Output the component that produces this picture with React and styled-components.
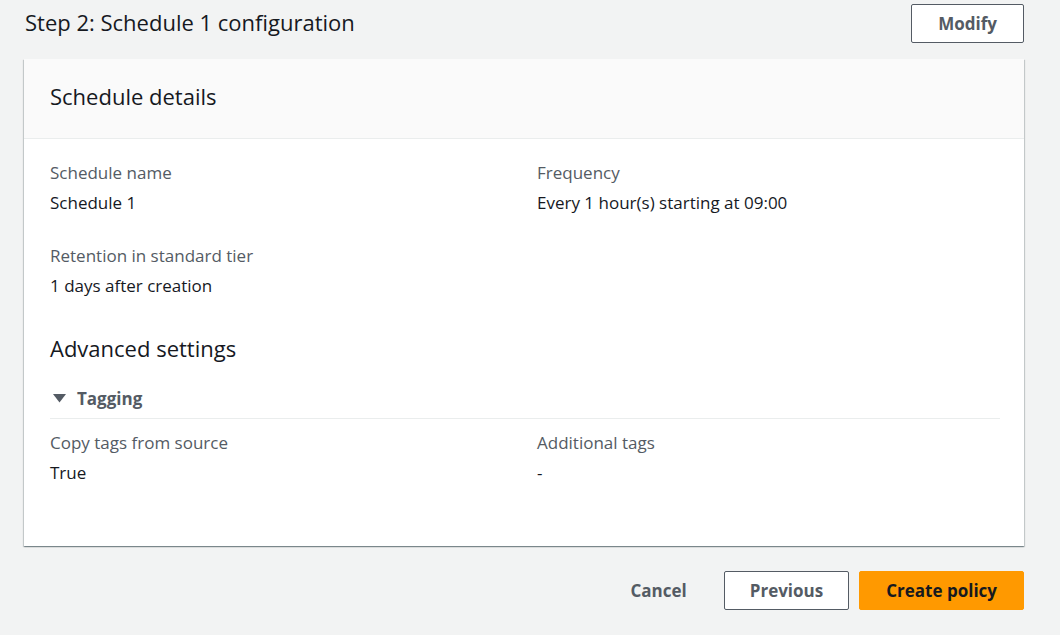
import React from 'react';
import styled, { createGlobalStyle } from 'styled-components';

const GlobalStyle = createGlobalStyle`
  body {
    margin: 0;
    background: #f2f3f3;
    font-family: "Open Sans", "Noto Sans", sans-serif;
    color: #16191f;
  }
`;

const Page = styled.div`
  width: 1060px;
  height: 635px;
  padding: 4px 36px 0 24px;
  box-sizing: border-box;
  overflow: hidden;
`;

const TitleBar = styled.div`
  display: flex;
  align-items: center;
  justify-content: space-between;
  height: 38px;
  margin-bottom: 17px;
`;

const StepTitle = styled.h2`
  margin: 0 0 3px 1px;
  font-size: 22px;
  line-height: 30px;
  font-weight: 400;
  color: #16191f;
`;

const Button = styled.button`
  height: 39px;
  padding: 0 ${(p) => p.$pad || 24}px;
  border-radius: 2px;
  font-family: inherit;
  font-size: 17px;
  font-weight: 700;
  cursor: pointer;
  border: 1px solid ${(p) => (p.$primary ? '#ff9900' : p.$link ? 'transparent' : '#545b64')};
  background: ${(p) => (p.$primary ? '#ff9900' : p.$link ? 'transparent' : '#ffffff')};
  color: ${(p) => (p.$primary ? '#16191f' : '#545b64')};
`;

const Card = styled.section`
  background: #ffffff;
  box-shadow: 0 1px 1px 0 rgba(0, 28, 36, 0.3), 1px 1px 1px 0 rgba(0, 28, 36, 0.15),
    -1px 1px 1px 0 rgba(0, 28, 36, 0.15);
`;

const CardHeader = styled.div`
  height: 79px;
  display: flex;
  align-items: center;
  padding: 0 26px;
  background: #fafafa;
  border-bottom: 1px solid #eaeded;
`;

const CardTitle = styled.h3`
  margin: 0 0 5px 0;
  font-size: 22px;
  line-height: 30px;
  font-weight: 400;
`;

const CardBody = styled.div`
  padding: 23px 24px 62px 26px;
`;

const Grid = styled.div`
  display: grid;
  grid-template-columns: 1fr 1fr;
  column-gap: 24px;
  row-gap: 31px;
`;

const Field = styled.div`
  display: flex;
  flex-direction: column;
  gap: 8px;
`;

const Label = styled.div`
  font-size: 17px;
  line-height: 22px;
  color: #545b64;
`;

const Value = styled.div`
  font-size: 17px;
  line-height: 22px;
  color: #16191f;
`;

const SectionTitle = styled.h3`
  margin: 36px 0 24px;
  font-size: 22px;
  line-height: 30px;
  font-weight: 400;
`;

const Expander = styled.div`
  display: flex;
  align-items: center;
  gap: 11px;
  height: 22px;
  padding: 0 0 9px 3px;
  border-bottom: 1px solid #eaeded;
  margin-bottom: 13px;
  font-size: 17px;
  font-weight: 700;
  color: #545b64;
`;

const Footer = styled.div`
  display: flex;
  justify-content: flex-end;
  align-items: center;
  gap: 10px;
  margin-top: 25px;
`;

const Caret = () => (
  <svg width="13" height="10" viewBox="0 0 13 10">
    <path d="M0 1h13L6.5 9.5z" fill="#545b64" />
  </svg>
);

const App = () => (
  <>
    <GlobalStyle />
    <Page>
      <TitleBar>
        <StepTitle>Step 2: Schedule 1 configuration</StepTitle>
        <Button $pad={26}>Modify</Button>
      </TitleBar>
      <Card>
        <CardHeader>
          <CardTitle>Schedule details</CardTitle>
        </CardHeader>
        <CardBody>
          <Grid>
            <Field>
              <Label>Schedule name</Label>
              <Value>Schedule 1</Value>
            </Field>
            <Field>
              <Label>Frequency</Label>
              <Value>Every 1 hour(s) starting at 09:00</Value>
            </Field>
            <Field>
              <Label>Retention in standard tier</Label>
              <Value>1 days after creation</Value>
            </Field>
          </Grid>
          <SectionTitle>Advanced settings</SectionTitle>
          <Expander>
            <Caret />
            Tagging
          </Expander>
          <Grid>
            <Field>
              <Label>Copy tags from source</Label>
              <Value>True</Value>
            </Field>
            <Field>
              <Label>Additional tags</Label>
              <Value>-</Value>
            </Field>
          </Grid>
        </CardBody>
      </Card>
      <Footer>
        <Button $link $pad={26}>Cancel</Button>
        <Button $pad={25}>Previous</Button>
        <Button $primary $pad={26}>Create policy</Button>
      </Footer>
    </Page>
  </>
);

export default App;
